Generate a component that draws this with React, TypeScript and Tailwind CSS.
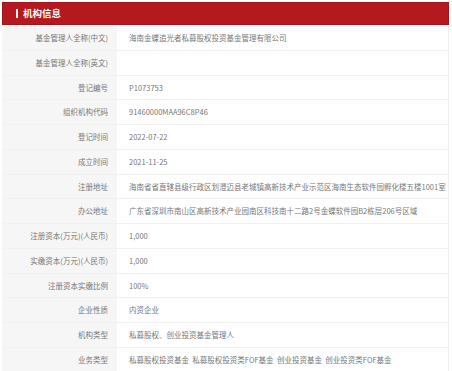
import React from 'react';

type Row = {
  label: string;
  value: string;
};

const rows: Row[] = [
  { label: '基金管理人全称(中文)', value: '海南金蝶追光者私募股权投资基金管理有限公司' },
  { label: '基金管理人全称(英文)', value: '' },
  { label: '登记编号', value: 'P1073753' },
  { label: '组织机构代码', value: '91460000MAA96C8P46' },
  { label: '登记时间', value: '2022-07-22' },
  { label: '成立时间', value: '2021-11-25' },
  {
    label: '注册地址',
    value: '海南省省直辖县级行政区划澄迈县老城镇高新技术产业示范区海南生态软件园孵化楼五楼1001室',
  },
  { label: '办公地址', value: '广东省深圳市南山区高新技术产业园南区科技南十二路2号金蝶软件园B2栋层206号区域' },
  { label: '注册资本(万元)(人民币)', value: '1,000' },
  { label: '实缴资本(万元)(人民币)', value: '1,000' },
  { label: '注册资本实缴比例', value: '100%' },
  { label: '企业性质', value: '内资企业' },
  { label: '机构类型', value: '私募股权、创业投资基金管理人' },
  { label: '业务类型', value: '私募股权投资基金  私募股权投资类FOF基金  创业投资基金  创业投资类FOF基金' },
];

const App = () => {
  return (
    <div
      className="w-[452px] h-[371px] overflow-hidden bg-white pt-[2px] pl-[2px]"
      style={{ fontFamily: '"Noto Sans CJK SC", "Noto Sans", sans-serif' }}
    >
      <div className="w-[447px]">
        {/* header */}
        <div className="h-[23px] bg-[#b5191f] border border-[#a3151b] flex items-center pl-[13px]">
          <span className="w-[2px] h-[9px] bg-white" />
          <span className="ml-[5px] text-[9.5px] font-bold text-white leading-none">机构信息</span>
        </div>

        <div className="mt-[1px] border-r border-[#eeeeee]">
          {rows.map((row) => (
            <div
              key={row.label}
              className="grid grid-cols-[116px_1fr] h-[24.75px] border-b border-[#f1f1f1] text-[7.5px] text-[#777777] leading-none"
            >
              <div className="bg-[#f6f6f6] border-r border-white flex items-center justify-end pr-[9px] whitespace-nowrap">
                {row.label}
              </div>
              <div className="flex items-center pl-[11px] whitespace-pre overflow-hidden">{row.value}</div>
            </div>
          ))}
        </div>
      </div>
    </div>
  );
};

export default App;
